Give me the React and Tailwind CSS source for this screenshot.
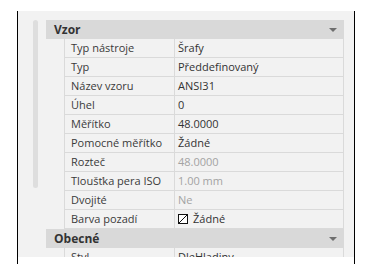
import React from "react";

const rows = [
  ["Typ nástroje", "Šrafy", false],
  ["Typ", "Předdefinovaný", false],
  ["Název vzoru", "ANSI31", false],
  ["Úhel", "0", false],
  ["Měřítko", "48.0000", false],
  ["Pomocné měřítko", "Žádné", false],
  ["Rozteč", "48.0000", true],
  ["Tloušťka pera ISO", "1.00 mm", true],
  ["Dvojité", "Ne", true],
  ["Barva pozadí", "Žádné", false, true],
];

function Header({ title }) {
  return (
    <div className="flex h-[19px] items-center justify-between bg-[#d9d9d9] pl-[8px] pr-[7px]">
      <span className="text-[12px] font-bold leading-[19px] text-[#333333]">{title}</span>
      <svg width="8" height="4" viewBox="0 0 8 4" className="mt-[1px]">
        <path d="M0 0 H8 L4 4 Z" fill="#6e6e6e" />
      </svg>
    </div>
  );
}

function Row({ label, value, disabled, swatch }) {
  return (
    <div className="flex h-[19px]">
      <div className="w-[18px] shrink-0" />
      <div className="flex w-[280px] border-x border-b border-[#dadada]">
        <div className="w-[110px] shrink-0 border-r border-[#dadada] pl-[6px] text-[11px] leading-[18px] text-[#3a3a3a]">
          {label}
        </div>
        <div
          className={
            "flex flex-1 items-center gap-[5px] pl-[3px] text-[11px] leading-[18px] " +
            (disabled ? "text-[#a3a3a3]" : "text-[#333333]")
          }
        >
          {swatch && (
            <svg width="10" height="10" viewBox="0 0 10 10" className="shrink-0">
              <rect x="0.5" y="0.5" width="9" height="9" fill="white" stroke="#111" />
              <path d="M1 9 L9 1" stroke="#111" strokeWidth="1" />
            </svg>
          )}
          <span>{value}</span>
        </div>
      </div>
    </div>
  );
}

export default function App() {
  return (
    <div
      className="h-[275px] w-[370px] overflow-hidden bg-white pt-[11px]"
      style={{ fontFamily: '"Open Sans", "Noto Sans", sans-serif' }}
    >
      <div className="ml-[17px] w-[338px] border-x border-black">
        <div className="flex h-[246px] overflow-hidden bg-[#f2f2f2] pt-[9px]">
          <div className="pl-[15px]">
            <div className="h-[168px] w-[5px] rounded-full bg-[#dedede]" />
          </div>
          <div className="ml-[8px] flex w-[298px] flex-col">
            <Header title="Vzor" />
            {rows.map(([l, v, d, s]) => (
              <Row key={l} label={l} value={v} disabled={d} swatch={s} />
            ))}
            <div className="h-[4px]" />
            <Header title="Obecné" />
            <Row label="Styl" value="DleHladiny" />
          </div>
        </div>
        <div className="h-[7px] bg-white" />
      </div>
    </div>
  );
}
